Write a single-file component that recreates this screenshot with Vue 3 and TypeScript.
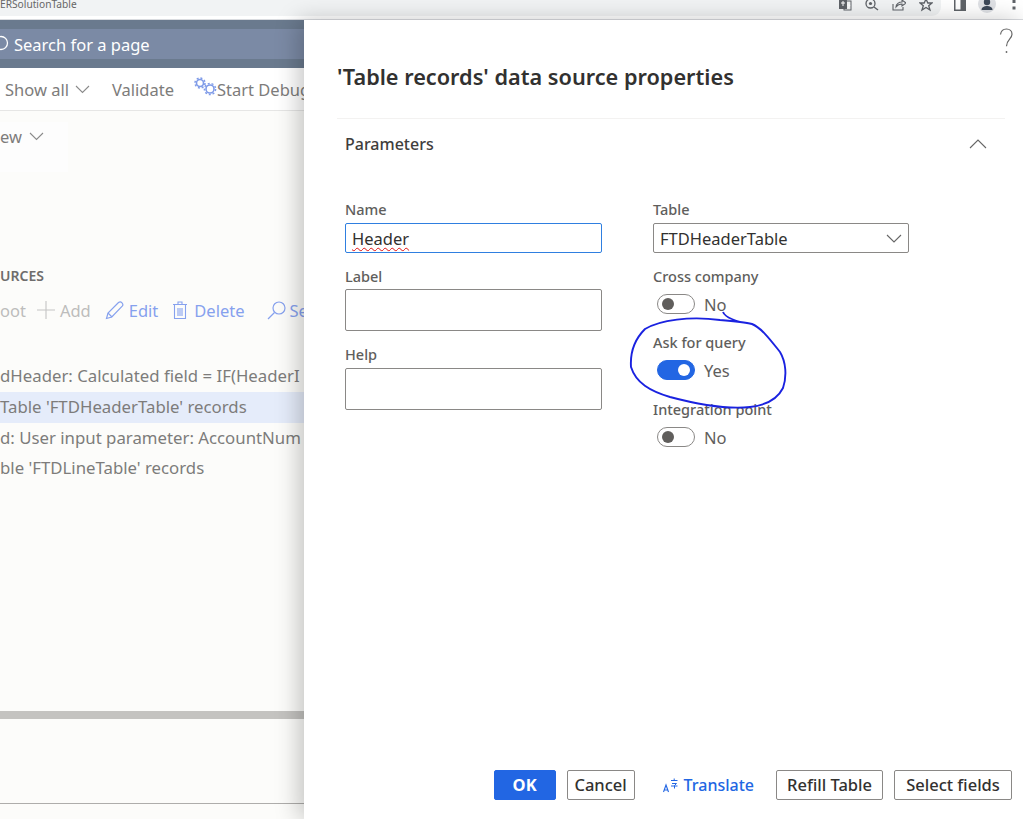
<template>
  <div class="page">
    <div class="browser-bar">
      <div class="url-pill">
        <span class="url-text">ERSolutionTable</span>
        <div class="pill-icons">
          <svg width="14" height="12" viewBox="0 0 14 12">
            <rect x="1" y="-2" width="8" height="11" fill="#5f6368" />
            <rect x="6" y="1" width="7" height="9" fill="none" stroke="#5f6368" />
            <path d="M3 3h4M5 1v5M9 5h3M10 8l2-3" stroke="#fff" fill="none" />
          </svg>
          <svg width="14" height="12" viewBox="0 0 14 12">
            <circle cx="5.5" cy="3.5" r="4.5" fill="none" stroke="#5f6368" stroke-width="1.3" />
            <circle cx="5.5" cy="3.5" r="1.6" fill="#5f6368" />
            <path d="M9 7l4 3" stroke="#5f6368" stroke-width="1.4" />
          </svg>
          <svg width="14" height="12" viewBox="0 0 14 12">
            <path d="M1 4v6h10V7M4 7c0-3 3-5 6-5V0l4 3-4 3V4C7.500 4 5.500 5 4 7z" fill="none" stroke="#5f6368" stroke-width="1.1" />
          </svg>
          <svg width="14" height="12" viewBox="0 0 14 12">
            <path d="M7 -1l1.800 4H13l-3.300 2.800L11 10 7 7.500 3 10l1.300-4.200L1 3h4.200z" fill="none" stroke="#5f6368" stroke-width="1.3" />
          </svg>
        </div>
      </div>
      <div class="bar-icons">
        <svg width="12" height="11" viewBox="0 0 12 11">
          <path d="M0 0h12v11H0z" fill="#5f6368" />
          <path d="M1.500 0h5v9.500h-5z" fill="#fff" />
        </svg>
        <svg width="18" height="14" viewBox="0 0 18 14">
          <circle cx="9" cy="4" r="9" fill="#dfe1e5" />
          <circle cx="9" cy="2" r="3.200" fill="#3c4858" />
          <path d="M3.500 10c0-3 3-4 5.500-4s5.500 1 5.500 4z" fill="#3c4858" />
        </svg>
        <svg width="4" height="11" viewBox="0 0 4 11">
          <rect x="0.500" y="0" width="3" height="3" fill="#5f6368" />
          <rect x="0.500" y="6.500" width="3" height="3" fill="#5f6368" />
        </svg>
      </div>
    </div>

    <div class="main">
      <div class="backdrop">
        <div class="nav-band">
          <svg class="nav-search" width="10" height="18" viewBox="0 0 10 18">
            <circle cx="1" cy="8" r="6.500" fill="none" stroke="#fff" stroke-width="1.300" />
          </svg>
          <span>Search for a page</span>
        </div>

        <div class="action-bar">
          <span class="action show-all">Show all</span>
          <svg class="chev" width="15" height="9" viewBox="0 0 15 9">
            <path d="M1 1l6.500 6.500L14 1" fill="none" stroke="#8a8a8a" stroke-width="1.100" />
          </svg>
          <span class="action validate">Validate</span>
          <svg class="gears" width="23" height="20" viewBox="0 0 23 20">
            <circle cx="6" cy="6" r="3.500" fill="none" stroke="#7f9be8" stroke-width="1.600" />
            <circle cx="6" cy="6" r="5" fill="none" stroke="#7f9be8" stroke-width="1.500" stroke-dasharray="2 1.900" />
            <circle cx="16" cy="12" r="4" fill="none" stroke="#7f9be8" stroke-width="1.600" />
            <circle cx="16" cy="12" r="5.600" fill="none" stroke="#7f9be8" stroke-width="1.500" stroke-dasharray="2 1.900" />
          </svg>
          <span class="action">Start Debug</span>
        </div>

        <div class="view-card">
          <span>ew</span>
          <svg width="15" height="9" viewBox="0 0 15 9">
            <path d="M1 1l6.500 6.500L14 1" fill="none" stroke="#8a8a8a" stroke-width="1.100" />
          </svg>
        </div>

        <div class="section-title">URCES</div>

        <div class="tool-row">
          <span class="muted tool-root">oot</span>
          <svg class="tool-plus" width="18" height="18" viewBox="0 0 18 18">
            <path d="M9 0v18M0 9h18" stroke="#c4c4c4" stroke-width="1.100" />
          </svg>
          <span class="muted tool-add">Add</span>
          <svg class="tool-pencil" width="19" height="19" viewBox="0 0 19 19">
            <path d="M1.500 17.500l1.500-5.500L13.500 1.500c1-.8 2.500-.8 3.500.3s1 2.500.2 3.400L6.800 16z" fill="none" stroke="#86a1ee" stroke-width="1.200" />
            <path d="M3 12l4 4" stroke="#86a1ee" stroke-width="1.100" />
          </svg>
          <span class="link tool-edit">Edit</span>
          <svg class="tool-trash" width="14" height="18" viewBox="0 0 14 18">
            <path d="M0 3.500h14M5 3V1h4v2M1.500 4v13.500h11V4M5 7v8M7 7v8M9 7v8" fill="none" stroke="#86a1ee" stroke-width="1.100" />
          </svg>
          <span class="link tool-delete">Delete</span>
          <svg class="tool-find" width="19" height="19" viewBox="0 0 19 19">
            <circle cx="12" cy="7" r="6" fill="none" stroke="#86a1ee" stroke-width="1.200" />
            <path d="M7.500 11.500L1 18" stroke="#86a1ee" stroke-width="1.200" />
          </svg>
          <span class="link">Se</span>
        </div>

        <div class="tree">
          <div v-for="row in treeRows" :key="row.text" :class="['tree-row', { selected: row.selected }]">
            {{ row.text }}
          </div>
        </div>

        <div class="scroll-bar"></div>
        <div class="backdrop-footer"></div>
      </div>

      <div class="dialog">
        <div class="help-row">
          <svg width="14" height="27" viewBox="0 0 14 27">
            <path d="M1.500 6.500C2 3 4.500 1 7.500 1c3.200 0 5.500 2.200 5.500 5.200 0 4.800-5.500 5.300-5.500 12" fill="none" stroke="#666" stroke-width="1.200" />
            <circle cx="7.500" cy="24" r="0.900" fill="#666" />
          </svg>
        </div>

        <h2 class="dialog-title">'Table records' data source properties</h2>

        <div class="section-head">
          <span>Parameters</span>
          <svg width="18" height="10" viewBox="0 0 18 10">
            <path d="M1 9l8-8 8 8" fill="none" stroke="#666" stroke-width="1.100" />
          </svg>
        </div>

        <div class="form">
          <div class="form-col">
            <div class="field first">
              <label>Name</label>
              <div class="input focused"><span class="misspelled">Header</span></div>
            </div>
            <div class="field second">
              <label>Label</label>
              <div class="input tall"></div>
            </div>
            <div class="field third">
              <label>Help</label>
              <div class="input tall"></div>
            </div>
          </div>

          <div class="form-col narrow">
            <div class="field first">
              <label>Table</label>
              <div class="input select">
                <span>FTDHeaderTable</span>
                <svg width="16" height="9" viewBox="0 0 16 9">
                  <path d="M1 1l7 7 7-7" fill="none" stroke="#666" stroke-width="1.100" />
                </svg>
              </div>
            </div>
            <div v-for="item in toggles" :key="item.label" class="toggle-field">
              <label>{{ item.label }}</label>
              <div class="toggle-line">
                <span :class="['toggle', { on: item.on }]"><span class="knob"></span></span>
                <span class="toggle-text">{{ item.on ? 'Yes' : 'No' }}</span>
              </div>
            </div>
          </div>
        </div>

        <div class="dialog-footer">
          <button class="btn primary">OK</button>
          <button class="btn cancel">Cancel</button>
          <button class="translate">
            <svg width="15" height="15" viewBox="0 0 15 15">
              <path d="M8 2.500h6.500M11.200 0.500v2M9 5.500h4.500l-2 2v3M8 8h6.500" fill="none" stroke="#2266e3" stroke-width="1" />
              <path d="M0.500 14L3 7l2.500 7M1.500 12h3" fill="none" stroke="#2266e3" stroke-width="1.100" />
            </svg>
            <span>Translate</span>
          </button>
          <button class="btn refill">Refill Table</button>
          <button class="btn select-fields">Select fields</button>
        </div>
      </div>
    </div>

    <svg class="scribble" width="1023" height="819" viewBox="0 0 1023 819">
      <path
        d="M723 312C726 319 738 322 752 324C762 328 772 342 780 352C786 362 787 376 783 388C778 398 768 405 750 407C730 409 700 405 670 397C650 391 636 383 631 367C630 352 634 340 645 329C660 320 690 316 720 320C732 321 744 322 752 324"
        fill="none"
        stroke="#1a22e0"
        stroke-width="1.900"
      />
    </svg>
  </div>
</template>

<script setup lang="ts">
interface TreeRow {
  text: string;
  selected?: boolean;
}

const treeRows: TreeRow[] = [
  { text: 'dHeader: Calculated field = IF(HeaderI' },
  { text: "Table 'FTDHeaderTable' records", selected: true },
  { text: 'd: User input parameter: AccountNum' },
  { text: "ble 'FTDLineTable' records" }
];

const toggles = [
  { label: 'Cross company', on: false },
  { label: 'Ask for query', on: true },
  { label: 'Integration point', on: false }
];
</script>

<style>
html,
body {
  margin: 0;
  background: #fff;
}
</style>

<style scoped>
.page {
  position: relative;
  width: 1023px;
  height: 819px;
  overflow: hidden;
  font-family: "Noto Sans", "Open Sans", sans-serif;
  color: #323130;
  background: #fff;
}

.browser-bar {
  display: flex;
  height: 20px;
  box-sizing: border-box;
  border-bottom: 1px solid #dadce0;
  overflow: hidden;
}

.url-pill {
  display: flex;
  justify-content: space-between;
  width: 941px;
  height: 16px;
  padding-right: 8px;
  box-sizing: border-box;
  background: #f1f3f4;
  border-bottom-right-radius: 9px;
}

.url-text {
  font-size: 10.2px;
  line-height: 10px;
  color: #666;
  margin-top: -1px;
}

.pill-icons {
  display: flex;
  gap: 13px;
  align-items: flex-start;
}

.bar-icons {
  display: flex;
  align-items: flex-start;
  margin-left: 13px;
}

.bar-icons svg:nth-child(2) {
  margin-left: 12px;
}

.bar-icons svg:nth-child(3) {
  margin-left: 16px;
}

.main {
  display: flex;
  height: 799px;
}

.backdrop {
  display: flex;
  flex-direction: column;
  width: 304px;
  flex-shrink: 0;
  overflow: hidden;
  background: #fcfcfa;
  color: #7d7c7b;
  white-space: nowrap;
}

.backdrop svg {
  flex-shrink: 0;
}

.nav-band {
  display: flex;
  align-items: center;
  height: 30px;
  border-top: 9px solid #6a7a8e;
  border-bottom: 9px solid #6a7a8e;
  background: #7b8aa5;
  color: #fff;
  font-size: 16.5px;
}

.nav-search {
  margin-right: 4px;
}

.action-bar {
  display: flex;
  align-items: center;
  height: 41px;
  padding: 1px 0 0 5px;
  background: #fff;
  border-bottom: 1px solid #e6e6e5;
  font-size: 16.500px;
}

.chev {
  margin-left: 6px;
}

.validate {
  margin-left: 22px;
}

.gears {
  margin: -6px 0 0 20px;
}

.view-card {
  display: flex;
  align-items: center;
  gap: 7px;
  width: 68px;
  height: 50px;
  margin-top: 11px;
  padding-bottom: 22px;
  box-sizing: border-box;
  background: #fdfdfd;
  font-size: 16.500px;
}

.section-title {
  margin-top: 94px;
  height: 20px;
  line-height: 20px;
  font-size: 14px;
  font-weight: 600;
  color: #6e6d6c;
}

.tool-row {
  display: flex;
  align-items: center;
  height: 24px;
  margin-top: 12px;
  font-size: 16.500px;
}

.muted {
  color: #bdbdbc;
}

.link {
  color: #86a1ee;
}

.tool-plus {
  margin-left: 11px;
}

.tool-add {
  margin-left: 5px;
}

.tool-pencil {
  margin-left: 14px;
}

.tool-edit {
  margin-left: 5px;
}

.tool-trash {
  margin-left: 15px;
}

.tool-delete {
  margin-left: 7px;
}

.tool-find {
  margin: 0 4px 0 22px;
}

.tree {
  margin-top: 39px;
}

.tree-row {
  height: 30.800px;
  line-height: 30.800px;
  font-size: 16.800px;
  color: #7d7c7b;
}

.tree-row.selected {
  background: #e5ecfa;
}

.scroll-bar {
  margin-top: auto;
  height: 8px;
  flex-shrink: 0;
  background: #c4c3c0;
}

.backdrop-footer {
  height: 84px;
  flex-shrink: 0;
  margin-bottom: 15px;
  border-bottom: 1px solid #aeadab;
}

.dialog {
  position: relative;
  display: flex;
  flex-direction: column;
  flex: 1;
  background: #fff;
  box-shadow: -6px 0 22px rgba(0, 0, 0, 0.22);
}

.help-row {
  display: flex;
  justify-content: flex-end;
  height: 34px;
  padding: 8px 10px 0 0;
}

.dialog-title {
  margin: 0 0 0 33px;
  height: 30px;
  line-height: 30px;
  font-size: 21.700px;
  font-weight: 600;
  color: #323130;
}

.section-head {
  display: flex;
  align-items: center;
  justify-content: space-between;
  height: 50px;
  margin: 26px 18px 0 33px;
  padding: 0 18px 0 8px;
  border-top: 1px solid #f3f2f1;
  font-size: 16px;
  font-weight: 500;
  color: #3f3e3d;
}

.form {
  display: flex;
  gap: 51px;
  padding: 31px 0 0 41px;
}

.form-col {
  width: 257px;
}

.form-col.narrow {
  width: 256px;
}

label {
  display: block;
  height: 18px;
  line-height: 18px;
  font-size: 14.500px;
  font-weight: 500;
  color: #605e5c;
}

.field label {
  margin-bottom: 4px;
}

.field.first label {
  margin-bottom: 5px;
}

.field.second {
  margin-top: 14px;
}

.field.third {
  margin-top: 14px;
}

.field.third label {
  margin-bottom: 5px;
}

.input {
  display: flex;
  align-items: center;
  height: 30px;
  padding: 0 6px;
  box-sizing: border-box;
  border: 1px solid #8a8886;
  border-radius: 2px;
  font-size: 16.500px;
  color: #323130;
}

.input.tall {
  height: 42px;
}

.input.focused {
  border-color: #2f7fe0;
}

.input.select {
  justify-content: space-between;
}

.misspelled {
  text-decoration: underline wavy #e01010 1px;
  text-underline-offset: 2px;
}

.toggle-field {
  margin-top: 14px;
}

.toggle-field + .toggle-field {
  margin-top: 19px;
}

.toggle-field:last-child {
  margin-top: 20px;
}

.toggle-field label {
  margin-bottom: 9px;
}

.toggle-line {
  display: flex;
  align-items: center;
  gap: 9px;
  height: 20px;
  padding-left: 4px;
}

.toggle {
  display: flex;
  align-items: center;
  width: 38px;
  height: 20px;
  padding: 0 4px;
  box-sizing: border-box;
  border: 1px solid #8a8886;
  border-radius: 10px;
}

.toggle .knob {
  width: 12px;
  height: 12px;
  border-radius: 50%;
  background: #605e5c;
}

.toggle.on {
  justify-content: flex-end;
  background: #2266e3;
  border-color: #2266e3;
}

.toggle.on .knob {
  background: #fff;
}

.toggle-text {
  font-size: 16.500px;
  color: #605e5c;
}

.dialog-footer {
  display: flex;
  align-items: center;
  justify-content: flex-end;
  margin-top: auto;
  padding: 0 11px 19px 0;
}

.btn {
  height: 30px;
  padding: 0 0 2px;
  box-sizing: border-box;
  border: 1px solid #8a8886;
  border-radius: 2px;
  background: #fff;
  font-family: inherit;
  font-size: 16.500px;
  font-weight: 500;
  color: #323130;
}

.btn.primary {
  width: 62px;
  background: #2266e3;
  border-color: #2266e3;
  color: #fff;
  font-weight: 700;
}

.btn.cancel {
  width: 68px;
  margin-left: 11px;
}

.btn.refill {
  width: 107px;
  margin-left: 22px;
}

.btn.select-fields {
  width: 118px;
  margin-left: 11px;
}

.translate {
  display: flex;
  align-items: center;
  gap: 6px;
  margin-left: 28px;
  padding: 0;
  border: 0;
  background: none;
  font-family: inherit;
  font-size: 16px;
  font-weight: 500;
  color: #2266e3;
}

.scribble {
  position: absolute;
  top: 0;
  left: 0;
  pointer-events: none;
}
</style>
